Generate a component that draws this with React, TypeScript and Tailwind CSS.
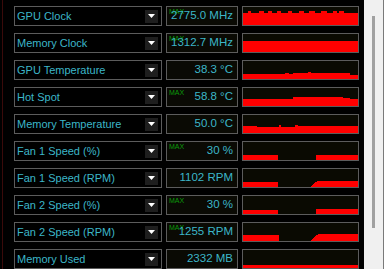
import React from "react";

type Seg = [number, number, number]; // [x0, x1, height] in screen px, x inclusive

interface Sensor {
  name: string;
  value: string;
  max?: boolean;
  graph: Seg[];
}

// graph starts at x=243 (inside border), 115px wide, 18px tall
const G0 = 243;

const spikes = (ranges: [number, number][], base: number, top: number, from: number, to: number): Seg[] => {
  const out: Seg[] = [[from, to, base]];
  ranges.forEach(([a, b]) => out.push([a, b, top]));
  return out;
};

const sensors: Sensor[] = [
  {
    name: "GPU Clock",
    value: "2775.0 MHz",
    max: true,
    graph: spikes(
      [
        [248, 250],
        [259, 263],
        [268, 271],
        [277, 280],
        [288, 291],
        [299, 303],
        [309, 314],
        [321, 326],
        [333, 336],
        [339, 343],
      ],
      12,
      14,
      243,
      357
    ),
  },
  { name: "Memory Clock", value: "1312.7 MHz", max: true, graph: [[243, 357, 11]] },
  {
    name: "GPU Temperature",
    value: "38.3 °C",
    graph: [
      [243, 285, 5],
      [285, 288, 6],
      [288, 293, 5],
      [293, 342, 6],
      [308, 310, 7],
      [342, 349, 6],
      [349, 357, 4],
    ],
  },
  {
    name: "Hot Spot",
    value: "58.8 °C",
    max: true,
    graph: [
      [243, 293, 7],
      [293, 342, 9],
      [342, 349, 8],
      [349, 357, 7],
    ],
  },
  {
    name: "Memory Temperature",
    value: "50.0 °C",
    graph: [
      [243, 256, 7],
      [256, 300, 6],
      [279, 280, 8],
      [295, 297, 8],
      [298, 300, 7],
      [300, 357, 7],
    ],
  },
  {
    name: "Fan 1 Speed (%)",
    value: "30 %",
    max: true,
    graph: [
      [243, 277, 5],
      [316, 357, 5],
    ],
  },
  {
    name: "Fan 1 Speed (RPM)",
    value: "1102 RPM",
    graph: [
      [243, 277, 5],
      [311, 311, 1],
      [312, 312, 2],
      [313, 313, 3],
      [314, 314, 4],
      [315, 316, 5],
      [317, 357, 6],
    ],
  },
  {
    name: "Fan 2 Speed (%)",
    value: "30 %",
    max: true,
    graph: [
      [243, 277, 4],
      [316, 357, 5],
    ],
  },
  {
    name: "Fan 2 Speed (RPM)",
    value: "1255 RPM",
    max: true,
    graph: [
      [243, 278, 6],
      [311, 311, 1],
      [312, 312, 2],
      [313, 313, 3],
      [314, 314, 4],
      [315, 315, 5],
      [316, 317, 6],
      [318, 357, 7],
    ],
  },
  { name: "Memory Used", value: "2332 MB", graph: [[243, 357, 3]] },
];

function Graph({ segs }: { segs: Seg[] }) {
  return (
    <svg width={115} height={18} shapeRendering="crispEdges" className="block">
      {segs.map(([a, b, h], i) => (
        <rect key={i} x={a - G0} y={18 - h} width={b - a + 1} height={h} fill="#ff0000" />
      ))}
    </svg>
  );
}

function SensorRow({ s }: { s: Sensor }) {
  return (
    <div className="flex h-[20px] gap-[4px]">
      {/* nombre + combo */}
      <div className="flex w-[148px] items-center border border-[#5c5c5c] bg-black pl-[2px]">
        <span className="flex-1 text-[11px] leading-[18px] text-[#3cb6c8] whitespace-nowrap">{s.name}</span>
        <div className="mr-[3px] flex h-[13px] w-[13px] items-center justify-center bg-[#1e1e1e]">
          <svg width={7} height={4} className="block">
            <polygon points="0,0 7,0 3.5,4" fill="#ffffff" />
          </svg>
        </div>
      </div>

      {/* valor */}
      <div className="relative w-[72px] border border-[#5c5c5c] bg-[#0a0a04] pr-[4px] text-right text-[11.5px] leading-[17px]">
        {s.max && (
          <span className="absolute left-[2px] top-[1px] text-[7px] leading-[7px] text-[#0a9a0a]">MAX</span>
        )}
        <span className="relative text-[#3cb6c8] whitespace-nowrap">{s.value}</span>
      </div>

      {/* grafico */}
      <div className="w-[117px] border border-[#5c5c5c] bg-[#0a0a02]">
        <Graph segs={s.graph} />
      </div>
    </div>
  );
}

export default function App() {
  return (
    <div className="flex h-[269px] w-[384px] overflow-hidden bg-black font-['Liberation_Sans',Arial,sans-serif]">
      <div className="ml-[2px] w-[1px] bg-[#3a0a0a]" />
      <div className="flex flex-col gap-[7px] pl-[11px] pt-[6px]">
        {sensors.map((s) => (
          <SensorRow key={s.name} s={s} />
        ))}
      </div>
      <div className="ml-[5px] flex w-[20px] border-r border-[#7a7a7a] bg-[#f0f0f0] pl-[8px] pt-[16px]">
        <div className="h-[212px] w-[3px] bg-[#a0a0a0]" />
      </div>
    </div>
  );
}
